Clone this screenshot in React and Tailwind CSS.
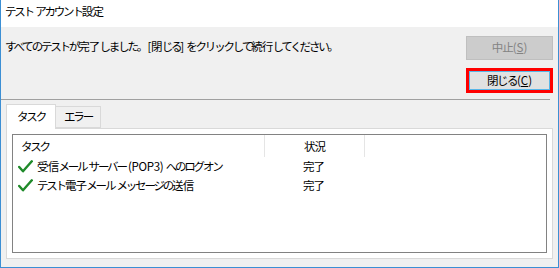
import React from "react";

const font = { fontFamily: '"Noto Sans CJK JP", "Noto Sans", sans-serif' };

// The original UI font has narrow kana, so runs are tightened by script:
// ASCII almost untouched, kanji a little, kana a lot.
const J = ({ children }) => {
  const parts = children.match(/[\x20-\x7e]+|[\u4e00-\u9fff\u3000-\u303f]+|[^\x20-\x7e\u4e00-\u9fff\u3000-\u303f]+/g) || [];
  return (
    <>
      {parts.map((p, i) => {
        if (/^[\x20-\x7e]+$/.test(p))
          return <span key={i} className="tracking-[-0.3px] whitespace-pre">{p}</span>;
        if (/^[\u4e00-\u9fff\u3000-\u303f]+$/.test(p))
          return <span key={i} className="tracking-[-0.8px]">{p}</span>;
        return <span key={i} className="tracking-[-2.2px]">{p}</span>;
      })}
    </>
  );
};

// Green check mark used in the task list
const Check = () => (
  <svg width="15" height="13" viewBox="0 0 15 13" className="mr-[4px] shrink-0">
    <path d="M1.2 7 L5 11.3 L13.8 1.3" fill="none" stroke="#1f8a2a" strokeWidth="2.4" strokeLinecap="round" strokeLinejoin="round" />
  </svg>
);

const App = () => {
  const tasks = [
    { name: "受信メール サーバー (POP3) へのログオン", status: "完了" },
    { name: "テスト電子メール メッセージの送信", status: "完了" },
  ];

  return (
    <div
      className="w-[559px] h-[268px] flex flex-col border-x border-b border-[#3c8fd4] text-[11.5px] text-black leading-none overflow-hidden"
      style={font}
    >
      {/* Title bar */}
      <div className="h-[27px] bg-white flex items-center pl-[4px] pb-[3px] shrink-0">
        <J>テスト アカウント設定</J>
      </div>

      {/* Body */}
      <div className="flex-1 bg-[#f0f0f0] flex flex-col">
        <div className="flex justify-between pt-[9px] pr-[5px] pl-[4px]">
          <div className="pt-[5px]">
            <J>すべてのテストが完了しました。[閉じる] をクリックして続行してください。</J>
          </div>
          <div className="flex flex-col gap-[8px]">
            <button className="w-[87px] h-[24px] bg-[#cccccc] border border-[#bfbfbf] text-[#838383]">
              <span className="tracking-[-1px]">中止</span>(<span className="underline">S</span>)
            </button>
            <button className="w-[87px] h-[25px] bg-[#e1e1e1] border-[3px] border-[#ff0000] outline outline-1 outline-[#58b6e8] -outline-offset-4">
              <span className="tracking-[-1.5px]">閉じる</span>(<span className="underline">C</span>)
            </button>
          </div>
        </div>

        <div className="mt-[6px] mr-[8px] border-t border-[#a0a0a0]" />

        {/* Tabs */}
        <div className="flex-1 flex flex-col px-[5px] pt-[4px] pb-[8px]">
          <div className="flex items-end h-[24px] relative z-10">
            <div className="h-[25px] w-[50px] bg-white border border-b-0 border-[#d9d9d9] flex items-center justify-center -mb-px">
              <J>タスク</J>
            </div>
            <div className="h-[22px] w-[45px] bg-[#f0f0f0] border border-l-0 border-[#d9d9d9] flex items-center justify-center">
              <J>エラー</J>
            </div>
          </div>
          <div className="flex-1 bg-white border border-[#d9d9d9] px-[5px] pt-[5px] pb-[5px] flex">
            <div className="flex-1 border border-[#828282] pl-[8px]">
              <div className="flex h-[22px] items-center">
                <div className="w-[244px] border-r border-[#e5e5e5] h-full flex items-center pt-[1px]">
                  <J>タスク</J>
                </div>
                <div className="w-[100px] border-r border-[#e5e5e5] h-full flex items-center pl-[39px] pt-[1px] tracking-[-1px]">
                  状況
                </div>
              </div>
              {tasks.map((t) => (
                <div key={t.name} className="flex h-[19px] items-center">
                  <div className="w-[244px] flex items-center -ml-[3px]">
                    <Check />
                    <span className="whitespace-nowrap"><J>{t.name}</J></span>
                  </div>
                  <div className="pl-[41px] tracking-[-1px]">{t.status}</div>
                </div>
              ))}
            </div>
          </div>
        </div>
      </div>
    </div>
  );
};

export default App;
